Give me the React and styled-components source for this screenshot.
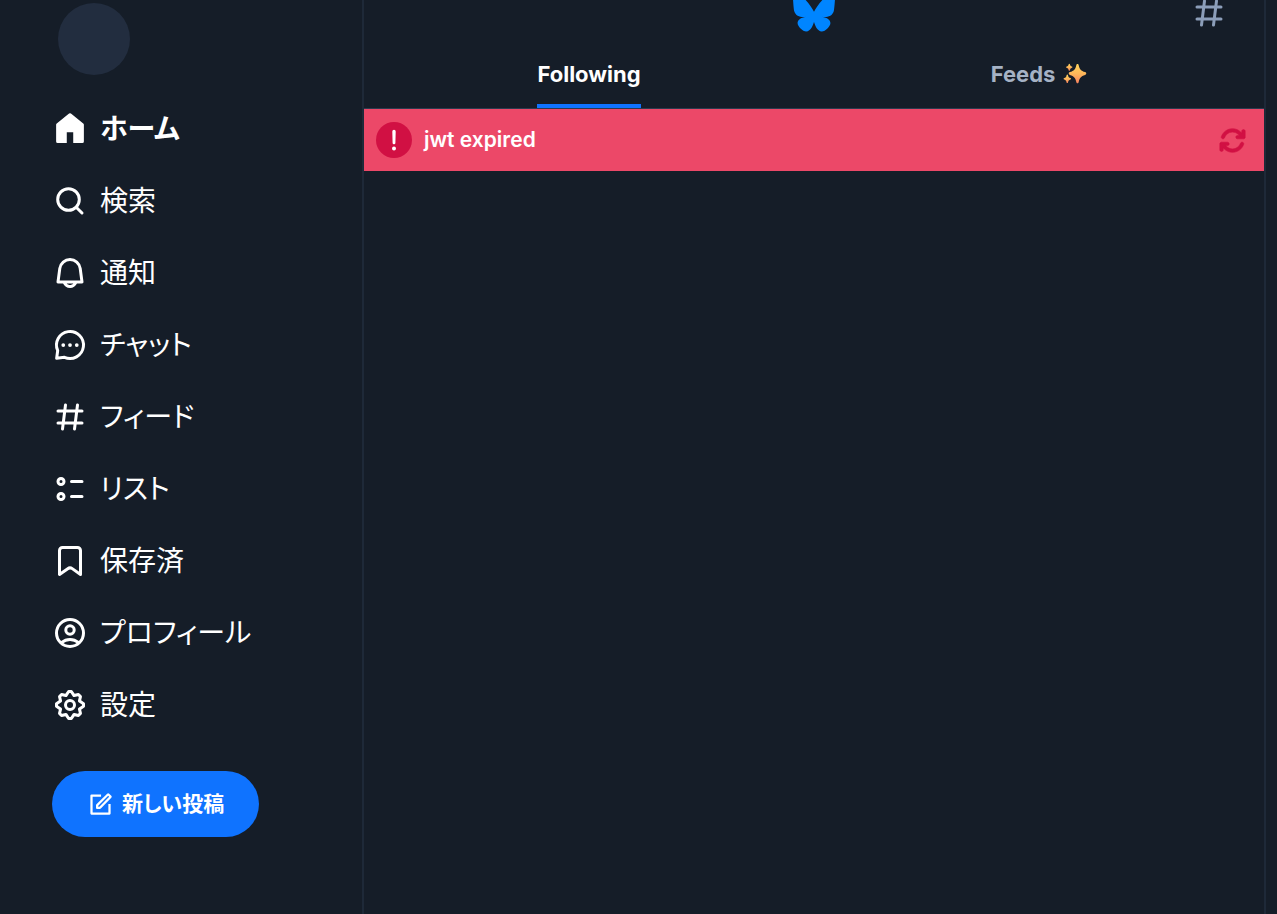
import React, { useState } from 'react'
import styled, { createGlobalStyle } from 'styled-components'
import { FaArrowsRotate } from 'react-icons/fa6'

const colors = {
    background: '#151d28',
    border: '#1e2938',
    line: '#2c3a4e',
    avatar: '#222d3f',
    text: '#ffffff',
    muted: '#a5b2c5',
    icon: '#8c9eb9',
    primary: '#0f73ff',
    brand: '#0085ff',
    error: '#ec4868',
    errorDark: '#d11043'
}

const GlobalStyle = createGlobalStyle`
    * {
        box-sizing: border-box;
    }
    body {
        margin: 0;
        background: ${colors.background};
        color: ${colors.text};
        font-family: Inter, "Noto Sans CJK JP", sans-serif;
        font-feature-settings: "palt";
    }
    button {
        border: 0;
        background: none;
        padding: 0;
        color: inherit;
        font: inherit;
        font-feature-settings: inherit;
        cursor: pointer;
    }
`

const Page = styled.div`
    display: grid;
    grid-template-columns: 362px minmax(0, 1fr);
    min-height: 100vh;
    padding-right: 11px;
`

const Sidebar = styled.aside`
    display: flex;
    flex-direction: column;
    align-items: flex-start;
    padding: 3px 24px 24px 52px;
`

const Avatar = styled.div`
    width: 72px;
    height: 72px;
    margin: 0 6px 18px;
    border-radius: 50%;
    background: ${colors.avatar};
`

const NavLink = styled.a`
    display: flex;
    align-items: center;
    gap: 12px;
    height: 72px;
    color: ${colors.text};
    font-family: "Noto Sans CJK JP", sans-serif;
    font-size: 28px;
    line-height: 36px;
    font-weight: ${props => (props.$active ? 700 : 400)};
    text-decoration: none;
`

/* the CJK face sits low in its line, so the label is lifted to the icon's centre */
const Label = styled.span`
    padding-bottom: 4px;
`

const Icon = styled.svg`
    flex: none;
    width: ${props => props.$size || 36}px;
    height: ${props => props.$size || 36}px;
    fill: ${props => (props.$stroked ? 'none' : 'currentColor')};
    stroke: ${props => (props.$stroked ? 'currentColor' : 'none')};
    stroke-width: 2;
    stroke-linecap: round;
    stroke-linejoin: round;
`

const ComposeButton = styled.button`
    display: flex;
    align-items: center;
    gap: 8px;
    height: 66px;
    margin-top: 30px;
    padding: 0 35px;
    border-radius: 33px;
    background: ${colors.primary};
    font-family: "Noto Sans CJK JP", sans-serif;
    font-size: 21px;
    font-weight: 700;
`

const Main = styled.main`
    border: solid ${colors.border};
    border-width: 0 2px;
`

/* the header is scrolled a few pixels past the top */
const Header = styled.header`
    display: grid;
    grid-template-columns: 1fr auto 1fr;
    align-items: center;
    height: 38px;
    margin-top: -6px;
    padding: 0 37px;
`

const Logo = styled.svg`
    grid-column: 2;
    width: 42px;
    height: 38px;
    fill: ${colors.brand};
`

const FeedsLink = styled.a`
    display: flex;
    justify-self: end;
    color: ${colors.icon};
`

const Tabs = styled.div`
    display: flex;
    margin-top: 10px;
    border-bottom: 1px solid ${colors.line};
`

const Tab = styled.button`
    display: flex;
    flex: 1;
    justify-content: center;
    color: ${props => (props.$active ? colors.text : colors.muted)};
    font-size: 22px;
    line-height: 28px;
    font-weight: 700;
`

const TabLabel = styled.span`
    display: flex;
    align-items: center;
    gap: 8px;
    padding: 18px 0 16px;
    border-bottom: 4px solid ${props => (props.$active ? colors.primary : 'transparent')};
`

const Sparkle = styled.svg`
    width: 24px;
    height: 24px;
`

const ErrorBanner = styled.div`
    display: flex;
    align-items: center;
    gap: 12px;
    height: 62px;
    padding: 0 18px 0 12px;
    background: ${colors.error};
    font-size: 21px;
    line-height: 28px;
    font-weight: 600;
`

const ErrorText = styled.span`
    flex: 1;
`

const RetryButton = styled.button`
    display: flex;
    color: ${colors.errorDark};
    font-size: 27px;
    svg {
        stroke: currentColor;
        stroke-width: 12px;
    }
`

const hashPath = 'M9.124 3.008a1 1 0 0 1 .868 1.116L9.632 7h5.985l.39-3.124a1 1 0 0 1 1.985.248L17.632 7H20a1 1 0 1 1 0 2h-2.617l-.75 6H20a1 1 0 1 1 0 2h-3.617l-.39 3.124a1 1 0 1 1-1.985-.248l.36-2.876H8.382l-.39 3.124a1 1 0 1 1-1.985-.248L6.368 17H4a1 1 0 1 1 0-2h2.617l.75-6H4a1 1 0 1 1 0-2h3.617l.39-3.124a1 1 0 0 1 1.117-.868ZM9.383 9l-.75 6h5.984l.75-6H9.383Z'

const navItems = [
    {
        name: 'ホーム',
        shape: <path d="M12.630 1.700a1 1 0 0 0-1.260 0l-8.200 6.600a1 1 0 0 0-.420.800v11.300a1 1 0 0 0 1 1h6.100v-7.300h4.300v7.300h6.100a1 1 0 0 0 1-1V9.100a1 1 0 0 0-.420-.800Z" />
    },
    {
        name: '検索',
        stroked: true,
        shape: <><circle cx="11" cy="11" r="7.200" /><path d="m16.300 16.300 3.700 3.700" /></>
    },
    {
        name: '通知',
        shape: <path d="M4.216 8.815a7.853 7.853 0 0 1 15.568 0l1.207 9.053A1 1 0 0 1 20 19h-3.354c-.904 1.748-2.607 3-4.646 3-2.039 0-3.742-1.252-4.646-3H4a1 1 0 0 1-.991-1.132l1.207-9.053ZM9.778 19c.61.637 1.399 1 2.222 1s1.613-.363 2.222-1H9.778ZM12 4a5.853 5.853 0 0 0-5.802 5.080L5.142 17h13.716l-1.056-7.920A5.853 5.853 0 0 0 12 4Z" />
    },
    {
        name: 'チャット',
        stroked: true,
        shape: (
            <>
                <path d="M3.100 20.900 3.800 15.700A9 9 0 1 1 8.300 20.200Z" />
                <g fill="currentColor" stroke="none">
                    <circle cx="7.500" cy="12" r="1.250" />
                    <circle cx="12" cy="12" r="1.250" />
                    <circle cx="16.500" cy="12" r="1.250" />
                </g>
            </>
        )
    },
    {
        name: 'フィード',
        shape: <path d={hashPath} />
    },
    {
        name: 'リスト',
        stroked: true,
        shape: <><circle cx="6" cy="7" r="2" /><circle cx="6" cy="17" r="2" /><path d="M13 7h7M13 17h7" /></>
    },
    {
        name: '保存済',
        stroked: true,
        shape: <path d="M5 5a2 2 0 0 1 2-2h10a2 2 0 0 1 2 2v16l-5.500-3.900a2.600 2.600 0 0 0-3 0L5 21Z" />
    },
    {
        name: 'プロフィール',
        stroked: true,
        shape: <><circle cx="12" cy="12" r="9" /><circle cx="12" cy="10" r="2.800" /><path d="M6.500 18.300a8.500 8.500 0 0 1 11 0" /></>
    },
    {
        name: '設定',
        shape: <path d="M11.100 2a1 1 0 0 0-.832.445L8.851 4.570 6.600 4.050a1 1 0 0 0-.932.268l-1.350 1.350a1 1 0 0 0-.267.932l.520 2.251-2.126 1.417A1 1 0 0 0 2 11.100v1.800a1 1 0 0 0 .445.832l2.125 1.417-.520 2.251a1 1 0 0 0 .268.932l1.350 1.350a1 1 0 0 0 .932.267l2.251-.520 1.417 2.126A1 1 0 0 0 11.100 22h1.800a1 1 0 0 0 .832-.445l1.417-2.125 2.251.520a1 1 0 0 0 .932-.268l1.350-1.350a1 1 0 0 0 .267-.932l-.520-2.251 2.126-1.417A1 1 0 0 0 22 12.900v-1.800a1 1 0 0 0-.445-.832L19.430 8.851l.520-2.251a1 1 0 0 0-.268-.932l-1.350-1.350a1 1 0 0 0-.932-.267l-2.251.520-1.417-2.126A1 1 0 0 0 12.900 2h-1.800Zm-.968 4.255L11.635 4h.730l1.503 2.255a1 1 0 0 0 1.057.420l2.385-.551.566.566-.550 2.385a1 1 0 0 0 .420 1.057L20 11.635v.730l-2.255 1.503a1 1 0 0 0-.420 1.057l.551 2.385-.566.566-2.385-.550a1 1 0 0 0-1.057.420L12.365 20h-.730l-1.503-2.255a1 1 0 0 0-1.057-.420l-2.385.551-.566-.566.550-2.385a1 1 0 0 0-.420-1.057L4 12.365v-.730l2.255-1.503a1 1 0 0 0 .420-1.057L6.123 6.690l.566-.566 2.385.550a1 1 0 0 0 1.057-.420ZM8 12a4 4 0 1 1 8 0 4 4 0 0 1-8 0Zm4-2a2 2 0 1 0 0 4 2 2 0 0 0 0-4Z" />
    }
]

const SparkleIcon = () => (
    <Sparkle viewBox="0 0 24 24" aria-hidden="true">
        <defs>
            <linearGradient id="sparkle" x1="0" y1="0" x2="0" y2="1">
                <stop offset="0" stopColor="#ffd45c" />
                <stop offset="0.5" stopColor="#fdb75a" />
                <stop offset="1" stopColor="#f9825f" />
            </linearGradient>
        </defs>
        <g fill="url(#sparkle)">
            <path d="M14.500 2c.7 0 1 .5 1.200 1.200 1 4.200 2.200 5.600 6.400 6.900.8.300 1.200.8 1.200 1.400s-.4 1.100-1.200 1.400c-4.200 1.400-5.400 2.800-6.400 7.100-.2.800-.5 1.300-1.200 1.300s-1-.5-1.200-1.300c-1-4.300-2.200-5.700-6.400-7.100-.8-.3-1.200-.8-1.200-1.400s.4-1.100 1.200-1.400c4.200-1.300 5.400-2.700 6.400-6.900.2-.7.5-1.200 1.200-1.200Z" />
            <path d="M6.300 1.700c.4 0 .5.3.6.6.4 1.500.8 1.900 2 2.300.4.200.5.400.5.600s-.1.500-.5.600c-1.200.5-1.600.9-2 2.400-.1.300-.2.600-.6.600s-.5-.3-.6-.6c-.4-1.500-.8-1.900-2-2.400-.4-.1-.6-.3-.6-.6s.2-.4.6-.6c1.200-.4 1.600-.8 2-2.300.1-.3.2-.6.6-.6Z" />
            <path d="M4.300 12.500c.4 0 .6.300.7.700.4 1.900.9 2.400 2.400 2.900.4.200.6.400.6.700s-.2.600-.6.700c-1.500.6-2 1.100-2.400 2.900-.1.400-.3.700-.7.700s-.6-.3-.7-.7c-.4-1.800-.9-2.300-2.400-2.900-.4-.1-.6-.4-.6-.7s.2-.5.6-.7c1.500-.5 2-1 2.400-2.900.1-.4.300-.7.700-.7Z" />
        </g>
    </Sparkle>
)

const App = () => {
    const [page, setPage] = useState('ホーム')
    const [tab, setTab] = useState('Following')

    return (
        <>
            <GlobalStyle />
            <Page>
                <Sidebar>
                    <Avatar />
                    <nav>
                        {
                            navItems.map(item => (
                                <NavLink
                                    key={item.name}
                                    href="#"
                                    $active={page === item.name}
                                    onClick={() => setPage(item.name)}
                                >
                                    <Icon viewBox="0 0 24 24" $stroked={item.stroked} aria-hidden="true">{item.shape}</Icon>
                                    <Label>{item.name}</Label>
                                </NavLink>
                            ))
                        }
                    </nav>
                    <ComposeButton type="button">
                        <Icon viewBox="0 0 24 24" $size={27} aria-hidden="true">
                            <path d="M17.900 2.400a1.300 1.300 0 0 1 1.800 0l1.900 1.900a1.300 1.300 0 0 1 0 1.800l-9.300 9.500A1.300 1.300 0 0 1 11.400 16H9a1 1 0 0 1-1-1v-2.400a1.300 1.300 0 0 1 .4-.9ZM10 13v1h1L19.700 5.200l-.9-.9ZM3 4a1 1 0 0 1 1-1h8.500v2H5v14h14v-7.500h2V20a1 1 0 0 1-1 1H4a1 1 0 0 1-1-1Z" />
                        </Icon>
                        <Label>新しい投稿</Label>
                    </ComposeButton>
                </Sidebar>
                <Main>
                    <Header>
                        <Logo viewBox="0 0 64 57" aria-hidden="true">
                            <path d="M13.873 3.805C21.210 9.332 29.103 20.537 32 26.550v15.882c0-.338-.130.044-.410.867-1.512 4.456-7.418 21.847-20.923 7.944-7.111-7.320-3.819-14.640 9.125-16.850-7.405 1.264-15.730-.825-18.014-9.015C1.120 23.022 0 8.510 0 6.550 0-3.268 8.579-.182 13.873 3.805ZM50.127 3.805C42.790 9.332 34.897 20.537 32 26.550v15.882c0-.338.130.044.410.867 1.512 4.456 7.418 21.847 20.923 7.944 7.111-7.320 3.819-14.640-9.125-16.850 7.405 1.264 15.730-.825 18.014-9.015C62.880 23.022 64 8.510 64 6.550c0-9.818-8.578-6.732-13.873-2.745Z" />
                        </Logo>
                        <FeedsLink href="#" aria-label="フィード">
                            <Icon viewBox="0 0 24 24" aria-hidden="true"><path d={hashPath} /></Icon>
                        </FeedsLink>
                    </Header>
                    <Tabs role="tablist">
                        {
                            ['Following', 'Feeds'].map(name => (
                                <Tab
                                    key={name}
                                    type="button"
                                    role="tab"
                                    aria-selected={tab === name}
                                    $active={tab === name}
                                    onClick={() => setTab(name)}
                                >
                                    <TabLabel $active={tab === name}>
                                        {name}
                                        {name === 'Feeds' ? <SparkleIcon /> : null}
                                    </TabLabel>
                                </Tab>
                            ))
                        }
                    </Tabs>
                    <ErrorBanner role="alert">
                        <Icon viewBox="0 0 36 36" aria-hidden="true">
                            <circle cx="18" cy="18" r="18" fill={colors.errorDark} />
                            <path d="M16.300 9.500a1.700 1.700 0 0 1 3.400 0l-.3 11.400a1.400 1.400 0 0 1-2.800 0Z" fill="#fff" />
                            <circle cx="18" cy="26.600" r="2" fill="#fff" />
                        </Icon>
                        <ErrorText>jwt expired</ErrorText>
                        <RetryButton type="button" aria-label="再試行">
                            <FaArrowsRotate />
                        </RetryButton>
                    </ErrorBanner>
                </Main>
            </Page>
        </>
    )
}

export default App
